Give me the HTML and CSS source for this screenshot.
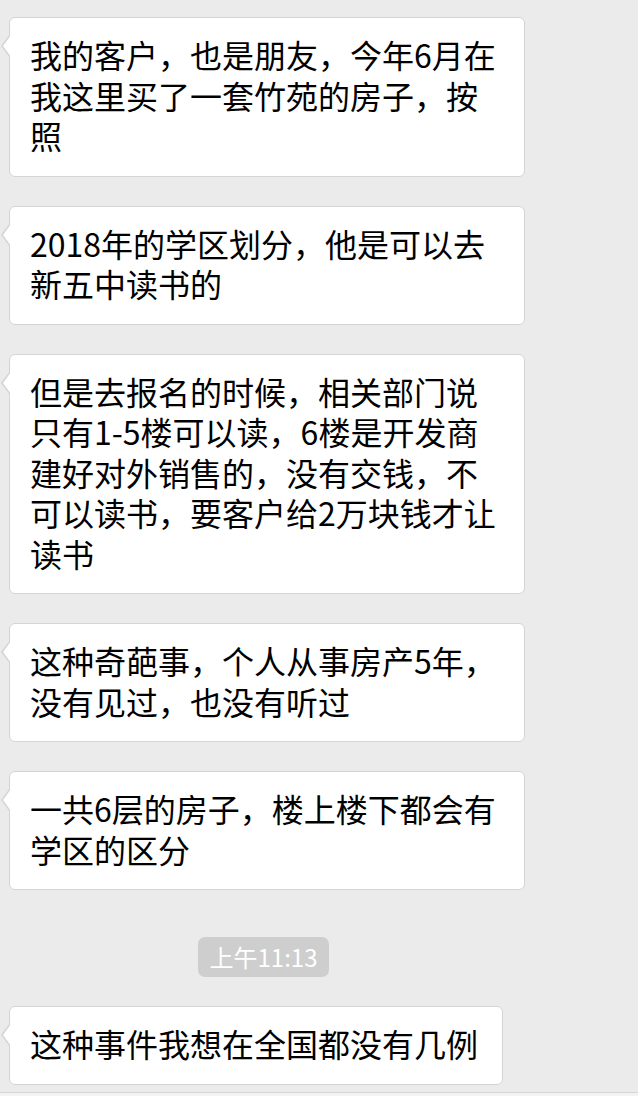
FILE: index.html
```html
<!DOCTYPE html>
<html lang="zh-CN">
<head>
  <meta charset="UTF-8">
  <meta name="viewport" content="width=device-width, initial-scale=1">
  <title>聊天记录</title>
  <link rel="stylesheet" href="styles.css">
</head>
<body>
  <div class="chat">
    <div class="bubble">我的客户，也是朋友，今年6月在我这里买了一套竹苑的房子，按照</div>
    <div class="bubble">2018年的学区划分，他是可以去新五中读书的</div>
    <div class="bubble">但是去报名的时候，相关部门说只有1-5楼可以读，6楼是开发商建好对外销售的，没有交钱，不可以读书，要客户给2万块钱才让读书</div>
    <div class="bubble">这种奇葩事，个人从事房产5年，没有见过，也没有听过</div>
    <div class="bubble">一共6层的房子，楼上楼下都会有学区的区分</div>

    <div class="time-row">
      <span class="time">上午11:13</span>
    </div>

    <div class="bubble">这种事件我想在全国都没有几例</div>
  </div>

  <div class="toolbar"></div>
</body>
</html>
```

FILE: styles.css
```css
html, body {
  margin: 0;
  padding: 0;
  background-color: #ebebeb;
  color: #000000;
  font-family: 'Noto Sans CJK SC', 'Noto Sans', sans-serif;
}

.chat {
  display: flex;
  flex-direction: column;
  align-items: flex-start;
  gap: 29px;
  padding-top: 17px;
}

.bubble {
  position: relative;
  box-sizing: border-box;
  max-width: 516px;
  margin-left: 9px;
  padding: 16px 24px 20px 20px;
  background-color: #ffffff;
  border: 1px solid #d4d4d4;
  border-radius: 6px;
  font-size: 32px;
  line-height: 40.5px;
}

/* little tail on the left side */
.bubble::before,
.bubble::after {
  content: '';
  position: absolute;
  top: 16px;
  border-style: solid;
  border-color: transparent;
}

.bubble::before {
  left: -9px;
  border-width: 12px 9px 12px 0;
  border-right-color: #d4d4d4;
}

.bubble::after {
  left: -7px;
  top: 17px;
  border-width: 11px 8px 11px 0;
  border-right-color: #ffffff;
}

.time-row {
  width: 527px;
  margin-top: 18px;
  text-align: center;
}

.time {
  display: inline-block;
  height: 40px;
  padding: 0 12px;
  background-color: #cecece;
  border-radius: 7px;
  color: #ffffff;
  font-size: 24px;
  line-height: 40px;
}

.toolbar {
  position: fixed;
  left: 0;
  right: 0;
  bottom: 0;
  height: 3px;
  background-color: #f3f3f3;
  border-top: 1px solid #d6d6d6;
}
```
